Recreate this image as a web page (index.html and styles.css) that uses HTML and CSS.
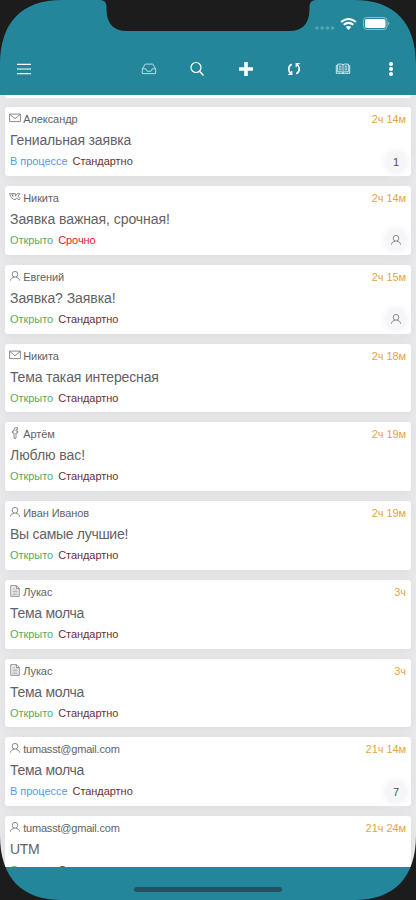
FILE: index.html
```
<!DOCTYPE html>
<html lang="ru">
<head>
<meta charset="utf-8">
<title>Заявки</title>
<link rel="stylesheet" href="styles.css">
</head>
<body>
<svg class="defs" aria-hidden="true">
  <symbol id="mail" viewBox="0 0 12 12"><path d="M.6 2.100h10.800v7.500H.6zM.8 2.400 6 6.700l5.200-4.300"/></symbol>
  <symbol id="user" viewBox="0 0 12 12"><ellipse cx="6" cy="4.300" rx="2.800" ry="2.900"/><path d="M4.700 6.900v.5L2.700 8.200Q1.500 8.700 1.500 10.600M7.300 6.900v.5l2 .8q1.200.5 1.200 2.400"/></symbol>
  <symbol id="vk" viewBox="0 0 12 12"><path d="M.5 2.700h2l1.400 2.700V3.100L3.400 2.600h3v2.600l1.800-2.500h2.600L9 5.200l2.200 2.600-.5.600H9L7.400 6.900 6.500 8.500H5Q2 7.500.5 2.700z"/></symbol>
  <symbol id="facebook" viewBox="0 0 12 12"><path d="M8.500.7H7Q5 .7 5 2.800V4H3.500v2H5v5.300h2V6h1.400l.3-2H7V3q0-.6.6-.6h.9z"/></symbol>
  <symbol id="doc" viewBox="0 0 12 12"><path d="M1.800.7h5.700l2.700 2.700v7.900H1.800zM7.300.8v2.800H10"/><path class="lines" d="M3.400 3.200H6M3.400 5h5.200M3.400 6.600h5.200M3.400 8.100h5.200M3.400 9.600h5.200"/></symbol>
</svg>
<div class="phone">
  <header class="topbar">
    <div class="status">
      <svg class="signal" viewBox="0 0 20 4"><circle cx="2" cy="2" r="1.700"/><circle cx="7.200" cy="2" r="1.700"/><circle cx="12.400" cy="2" r="1.700"/><circle cx="17.600" cy="2" r="1.700"/></svg>
      <svg class="wifi" viewBox="0 0 17 12"><path d="M1.100 4.100Q8.500-2.100 15.900 4.100M3.700 6.800q4.800-3.900 9.600 0" fill="none" stroke="#fff" stroke-width="2"/><path d="M5.700 9.100q2.800-2.300 5.600 0L8.500 12z" fill="#fff"/></svg>
      <svg class="battery" viewBox="0 0 27 13"><rect x=".5" y=".5" width="23.500" height="12" rx="3.200" fill="none" stroke="#8bc0cb"/><rect x="2" y="2" width="20.500" height="9" rx="1.800" fill="#fff"/><path d="M25.200 4.500q2.400 2 0 4z" fill="#8bc0cb"/></svg>
    </div>
    <nav class="tools">
      <svg viewBox="0 0 16 16"><path d="M1 3.400h14M1 8h14M1 12.600h14" stroke-width="1.200"/></svg>
      <svg class="soft" viewBox="0 0 16 16"><path d="M1.300 7.900 4.200 3.100h7.600l2.900 4.800v4.700H1.300zM1.300 7.800h3.400q.2 2.700 3.300 2.700t3.300-2.700h3.400"/></svg>
      <svg viewBox="0 0 16 16"><circle cx="7" cy="6.500" r="5" stroke-width="1.200"/><path d="m10.500 10.200 4 4.200" stroke-width="1.400"/></svg>
      <svg viewBox="0 0 16 16"><path d="M8 1v14M1 8h14" stroke-width="3.600"/></svg>
      <svg viewBox="0 0 16 16"><path d="M5.700 3.300Q2.700 4.900 2.700 8q.1 2.800 2.300 4.700M10.300 12.700q3-1.600 3-4.700-.1-2.800-2.300-4.700" stroke-width="1.600"/><path d="M2.300 13.400h3.500V10M13.700 2.600h-3.500V6" stroke-width="1.200"/></svg>
      <svg class="book" viewBox="0 0 16 16"><path d="M2.700 3.100h4L8 3.800l1.300-.7h4v7.700h-4L8 11.500l-1.300-.7h-4zM8 3.800v7.700M2.700 4.500H1.300v7.800h5.600l1.100.5 1.100-.5h5.600V4.500h-1.400M4 5.200h2.500M4 7h2.500M4 8.800h2.500M9.500 5.200H12M9.500 7H12M9.500 8.800H12"/></svg>
      <svg class="dots" viewBox="0 0 16 16"><circle cx="8" cy="3" r="2.050"/><circle cx="8" cy="8" r="2.050"/><circle cx="8" cy="13" r="2.050"/></svg>
    </nav>
  </header>
  <main class="list">
    <article class="card edge"></article>
    <article class="card">
      <div class="row"><svg class="ico"><use href="#mail"/></svg><span class="name">Александр</span><time>2ч 14м</time></div>
      <h2>Гениальная заявка</h2>
      <div class="tags"><span class="progress">В процессе</span><span class="standard">Стандартно</span></div>
      <span class="badge">1</span>
    </article>
    <article class="card">
      <div class="row"><svg class="ico"><use href="#vk"/></svg><span class="name">Никита</span><time>2ч 14м</time></div>
      <h2 class="wide">Заявка важная, срочная!</h2>
      <div class="tags"><span class="open">Открыто</span><span class="urgent">Срочно</span></div>
      <span class="badge"><svg class="ico"><use href="#user"/></svg></span>
    </article>
    <article class="card">
      <div class="row"><svg class="ico"><use href="#user"/></svg><span class="name">Евгений</span><time>2ч 15м</time></div>
      <h2 class="wide">Заявка? Заявка!</h2>
      <div class="tags"><span class="open">Открыто</span><span class="standard">Стандартно</span></div>
      <span class="badge"><svg class="ico"><use href="#user"/></svg></span>
    </article>
    <article class="card">
      <div class="row"><svg class="ico"><use href="#mail"/></svg><span class="name">Никита</span><time>2ч 18м</time></div>
      <h2>Тема такая интересная</h2>
      <div class="tags"><span class="open">Открыто</span><span class="standard">Стандартно</span></div>
    </article>
    <article class="card">
      <div class="row"><svg class="ico"><use href="#facebook"/></svg><span class="name">Артём</span><time>2ч 19м</time></div>
      <h2 class="wide">Люблю вас!</h2>
      <div class="tags"><span class="open">Открыто</span><span class="standard">Стандартно</span></div>
    </article>
    <article class="card">
      <div class="row"><svg class="ico"><use href="#user"/></svg><span class="name">Иван Иванов</span><time>2ч 19м</time></div>
      <h2 class="tight">Вы самые лучшие!</h2>
      <div class="tags"><span class="open">Открыто</span><span class="standard">Стандартно</span></div>
    </article>
    <article class="card">
      <div class="row"><svg class="ico"><use href="#doc"/></svg><span class="name">Лукас</span><time>3ч</time></div>
      <h2 class="tight">Тема молча</h2>
      <div class="tags"><span class="open">Открыто</span><span class="standard">Стандартно</span></div>
    </article>
    <article class="card">
      <div class="row"><svg class="ico"><use href="#doc"/></svg><span class="name">Лукас</span><time>3ч</time></div>
      <h2 class="tight">Тема молча</h2>
      <div class="tags"><span class="open">Открыто</span><span class="standard">Стандартно</span></div>
    </article>
    <article class="card">
      <div class="row"><svg class="ico"><use href="#user"/></svg><span class="name email">tumasst@gmail.com</span><time>21ч 14м</time></div>
      <h2 class="tight">Тема молча</h2>
      <div class="tags"><span class="progress">В процессе</span><span class="standard">Стандартно</span></div>
      <span class="badge">7</span>
    </article>
    <article class="card">
      <div class="row"><svg class="ico"><use href="#user"/></svg><span class="name email">tumasst@gmail.com</span><time>21ч 24м</time></div>
      <h2 class="tight">UTM</h2>
      <div class="tags"><span class="open">Открыто</span><span class="standard">Стандартно</span></div>
    </article>
  </main>
  <footer class="bottombar"><div class="home"></div></footer>
  <svg class="frame" viewBox="0 0 416 900">
    <path d="M0 0H62C22 0 0 22 0 65zM416 0H354C394 0 416 22 416 65zM0 835C0 878 22 900 62 900H0zM416 835C416 878 394 900 354 900H416z"/>
    <path d="M100 0Q106.500 0 106.500 7V10Q107 31 127 31H289Q309 31 309.500 10V7Q309.500 0 316 0z"/>
  </svg>
</div>
</body>
</html>
```
FILE: styles.css
```
* { box-sizing: border-box; }
body { margin: 0; background: #1c1c1c; font-family: "Liberation Sans", Arial, sans-serif; color: #626266; }
.defs { position: absolute; width: 0; height: 0; }
.phone { position: relative; width: 416px; height: 900px; overflow: hidden; display: flex; flex-direction: column; }
.frame { position: absolute; inset: 0; width: 416px; height: 900px; fill: #1c1c1c; }
.topbar { flex: none; height: 94.500px; background: #24869b; }
.status { height: 45px; display: flex; align-items: center; justify-content: flex-end; padding: 2px 26px 0 0; }
.signal { width: 20px; height: 4px; margin: 9px 5px 0 0; fill: #5ba6b5; }
.wifi { width: 17px; height: 12px; margin-right: 6px; }
.battery { width: 27px; height: 13px; }
.tools { display: flex; align-items: center; height: 48px; padding: 0 16px; }
.tools svg { width: 16px; height: 16px; margin-right: 32.500px; fill: none; stroke: #fff; flex: none; }
.tools svg:first-child { margin-right: 108.500px; }
.tools svg:last-child { margin-right: 0; }
.tools .soft { stroke: #b9dce3; }
.tools .book { stroke: #e2f1f4; stroke-width: .9; }
.tools .dots { fill: #fff; stroke: none; }
.list { flex: none; height: 772px; overflow: hidden; background: #e9e9eb; padding: 0 5px; }
.card { position: relative; height: 68.750px; margin-bottom: 10px; padding: 4.500px 5px 0; background: #fff; border-radius: 3px; box-shadow: 0 2px 10px rgba(90, 90, 110, .09); }
.card.edge { height: 3px; border-radius: 0 0 3px 3px; margin-bottom: 9.800px; padding: 0; }
.row { display: flex; align-items: center; height: 15px; font-size: 11px; }
.name { letter-spacing: -.08px; }
.email { letter-spacing: -.2px; }
.ico { width: 12px; height: 12px; fill: none; stroke: #66666a; stroke-width: .75; flex: none; }
.lines { stroke-width: .5; }
.row .ico { margin: -2px 1.500px 0 -.8px; }
.row .name { margin-left: .5px; }
time { margin-left: auto; color: #e5a347; letter-spacing: -.06px; }
h2 { margin: 4.500px 0 0; font-size: 14px; line-height: 18px; font-weight: 400; letter-spacing: -.15px; white-space: nowrap; }
h2.wide { letter-spacing: -.06px; }
h2.tight { letter-spacing: -.29px; }
.tags { display: flex; gap: 5px; height: 15px; margin-top: 5px; font-size: 11px; line-height: 15px; letter-spacing: -.05px; }
.progress { color: #559ae9; }
.open { color: #57ab5d; }
.standard { color: #6c3034; }
.urgent { color: #e6191f; }
.badge { position: absolute; right: 4px; bottom: 3.500px; width: 22px; height: 22px; border-radius: 50%; background: #f6f6f8; box-shadow: 0 0 6px 2px #f6f6f8; display: flex; align-items: center; justify-content: center; font-size: 11px; color: #4e4e52; }
.bottombar { flex: 1; background: #24869b; display: flex; justify-content: center; padding-top: 20.500px; }
.home { width: 148px; height: 5px; border-radius: 3px; background: #24515d; }
```
